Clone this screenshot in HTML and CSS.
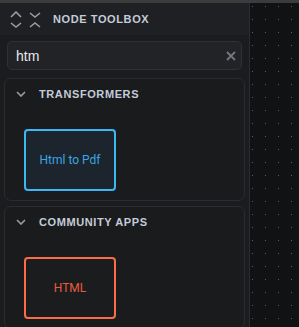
FILE: index.html
```html
<!DOCTYPE html>
<html lang="en">
	<head>
		<meta charset="utf-8">
		<meta name="viewport" content="width=device-width, initial-scale=1">
		<title>Node Toolbox</title>
		<link rel="stylesheet" href="styles.css">
	</head>
	<body>
		<div class="topbar"></div>
		<div class="main">
			<aside class="toolbox">
				<div class="tb-head">
					<svg class="head-icons" width="32" height="18" viewBox="0 0 32 18">
						<path d="M1 6 L6 1 L11 6 M1 12 L6 16 L11 12" />
						<path d="M20 2 L25 6 L30 2 M20 16 L25 12 L30 16" />
					</svg>
					<span class="title">Node Toolbox</span>
				</div>
				<div class="search">
					<input class="search-input" type="text" value="htm">
					<svg class="clear" width="10" height="10" viewBox="0 0 10 10">
						<path d="M1 1 L9 9 M9 1 L1 9" />
					</svg>
				</div>
				<section class="group">
					<div class="group-head">
						<svg class="chev" width="10" height="6" viewBox="0 0 10 6"><path d="M1 1 L5 5 L9 1" /></svg>
						<span class="title">Transformers</span>
					</div>
					<div class="nodes">
						<div class="node node-blue">Html to Pdf</div>
					</div>
				</section>
				<section class="group">
					<div class="group-head">
						<svg class="chev" width="10" height="6" viewBox="0 0 10 6"><path d="M1 1 L5 5 L9 1" /></svg>
						<span class="title">Community Apps</span>
					</div>
					<div class="nodes">
						<div class="node node-red">HTML</div>
					</div>
				</section>
			</aside>
			<div class="canvas"></div>
		</div>
	</body>
</html>
```

FILE: styles.css
```css
body {
	margin: 0;
	width: 299px;
	height: 327px;
	overflow: hidden;
	background-color: #111214;
	font-family: "Liberation Sans", Arial, sans-serif;
}

.topbar {
	height: 3px;
	background-color: #3c3c3d;
}

.main {
	display: flex;
	height: 324px;
}

.toolbox {
	width: 249px;
	flex-shrink: 0;
	background-color: #1b1c1f;
	border-right: 1px solid #2b2c30;
	overflow: hidden;
}

.tb-head {
	display: flex;
	align-items: center;
	height: 32px;
	padding-left: 10px;
	background-color: #1f2023;
}

.head-icons {
	margin-top: 1px;
}

.head-icons path,
.chev path,
.clear path {
	fill: none;
	stroke: #9a9da3;
	stroke-width: 1.6;
}

.title {
	font-size: 11px;
	font-weight: bold;
	letter-spacing: 0.6px;
	text-transform: uppercase;
	color: #c3ccd8;
}

.tb-head .title {
	margin-left: 11px;
}

.search {
	position: relative;
	padding: 6px 7px 8px 7px;
}

.search-input {
	box-sizing: border-box;
	width: 235px;
	height: 29px;
	margin: 0;
	padding: 0 8px;
	border: 1px solid #303136;
	border-radius: 5px;
	background-color: #222327;
	color: #e6e8ec;
	font-family: "Liberation Sans", Arial, sans-serif;
	font-size: 14px;
	outline: none;
}

.clear {
	position: absolute;
	left: 226px;
	top: 16px;
}

.clear path {
	stroke: #75777c;
	stroke-width: 1.8;
}

.group {
	margin: 0 0 5px 4px;
	width: 241px;
	box-sizing: border-box;
	border: 1px solid #2b2c30;
	border-radius: 7px;
	background-color: #1a1b1d;
	padding-bottom: 9px;
}

.group-head {
	display: flex;
	align-items: center;
	height: 30px;
	padding-left: 11px;
}

.chev {
	margin-right: 13px;
}

.nodes {
	display: flex;
	padding: 20px 0 0 19px;
}

.node {
	box-sizing: border-box;
	width: 92px;
	height: 62px;
	border: 2px solid;
	border-radius: 4px;
	display: flex;
	align-items: center;
	justify-content: center;
	font-family: Roboto, "Liberation Sans", sans-serif;
	font-size: 12px;
	font-weight: normal;
}

.node-blue {
	border-color: #3cb8f2;
	background-color: #1c242d;
	color: #3aa6e4;
}

.node-red {
	border-color: #ff6a47;
	background-color: #1b1c1e;
	color: #ea5b3e;
}

.canvas {
	flex-grow: 1;
	background-color: #111214;
	background-image: radial-gradient(circle at 0.5px 0.5px, #5d5e63 0.9px, transparent 1px);
	background-size: 13px 13px;
	background-position: 2px 3px;
}
```
